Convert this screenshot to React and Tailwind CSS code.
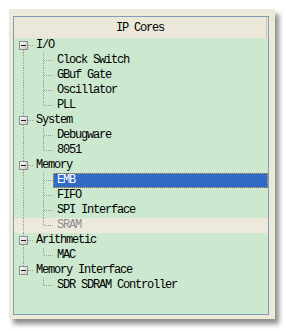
const tree = [
  { label: 'I/O', children: ['Clock Switch', 'GBuf Gate', 'Oscillator', 'PLL'] },
  { label: 'System', children: ['Debugware', '8051'] },
  { label: 'Memory', children: ['EMB', 'FIFO', 'SPI Interface', 'SRAM'] },
  { label: 'Arithmetic', children: ['MAC'] },
  { label: 'Memory Interface', children: ['SDR SDRAM Controller'] },
];

const SELECTED = 'EMB';
const DISABLED = 'SRAM';

const dot = { stroke: '#9a9a9a', strokeWidth: 1, strokeDasharray: '1 1', shapeRendering: 'crispEdges' };

function ParentLines({ first, last }) {
  return (
    <svg width="20" height="15" className="shrink-0">
      <defs>
        <linearGradient id="box" x1="0" y1="0" x2="1" y2="1">
          <stop offset="0" stopColor="#ffffff" />
          <stop offset="1" stopColor="#c6c3b6" />
        </linearGradient>
      </defs>
      {!first && <line x1="9.5" y1="0" x2="9.5" y2="3" style={dot} />}
      {!last && <line x1="9.5" y1="12" x2="9.5" y2="15" style={dot} />}
      <line x1="14" y1="7.5" x2="20" y2="7.5" style={dot} />
      <rect x="5.5" y="3.5" width="8" height="8" fill="url(#box)" stroke="#8c8f96" shapeRendering="crispEdges" />
      <line x1="7" y1="7.5" x2="12" y2="7.5" stroke="#1f1f1f" shapeRendering="crispEdges" />
    </svg>
  );
}

function ChildLines({ parentLast, last }) {
  return (
    <>
      <svg width="20" height="15" className="shrink-0">
        {!parentLast && <line x1="9.5" y1="0" x2="9.5" y2="15" style={dot} />}
      </svg>
      <svg width="19" height="15" className="shrink-0">
        <line x1="9.5" y1="0" x2="9.5" y2={last ? 8 : 15} style={dot} />
        <line x1="10" y1="7.5" x2="19" y2="7.5" style={dot} />
      </svg>
    </>
  );
}

export default function App() {
  return (
    <div
      className="w-[286px] h-[331px] bg-white pt-[9px] pl-[9px]"
      style={{ fontFamily: '"Liberation Mono", "DejaVu Sans Mono", monospace' }}
    >
      <div className="w-[266px] h-[310px] bg-[#ece9d8] pt-[7px] pl-[4px] pr-[6px] pb-[4px] shadow-[4px_5px_5px_rgba(0,0,0,0.45)]">
        <div className="h-full border border-[#7f9db9] bg-[#cce8cf] flex flex-col">
          <div className="h-[21px] bg-[#ebe8d9] pr-[1px]">
            <div className="h-full flex items-center justify-center border-r border-r-[#c8c5b4] text-[12px] tracking-[-1.2px] text-black">
              IP Cores
            </div>
          </div>
          <div className="flex flex-col text-[12px] leading-[15px] tracking-[-1.2px] text-black">
            {tree.map((node, i) => {
              const parentLast = i === tree.length - 1;
              return (
                <div key={node.label} className="flex flex-col">
                  <div className="h-[15px] flex items-center">
                    <ParentLines first={i === 0} last={parentLast} />
                    <span className="pl-[2px] whitespace-nowrap">{node.label}</span>
                  </div>
                  {node.children.map((c, j) => {
                    const last = j === node.children.length - 1;
                    const sel = c === SELECTED;
                    const dis = c === DISABLED;
                    return (
                      <div key={c} className={`h-[15px] flex items-center ${dis ? 'bg-[#ede9dc]' : ''}`}>
                        <ChildLines parentLast={parentLast} last={last} />
                        {sel ? (
                          <span className="flex-1 h-[15px] bg-[#316ac5] text-white border border-dotted border-[#e0a448] pl-[3px] leading-[13px] whitespace-nowrap">
                            {c}
                          </span>
                        ) : (
                          <span className={`pl-[4px] whitespace-nowrap ${dis ? 'text-[#8e8e8e]' : ''}`}>{c}</span>
                        )}
                      </div>
                    );
                  })}
                </div>
              );
            })}
          </div>
        </div>
      </div>
    </div>
  );
}
